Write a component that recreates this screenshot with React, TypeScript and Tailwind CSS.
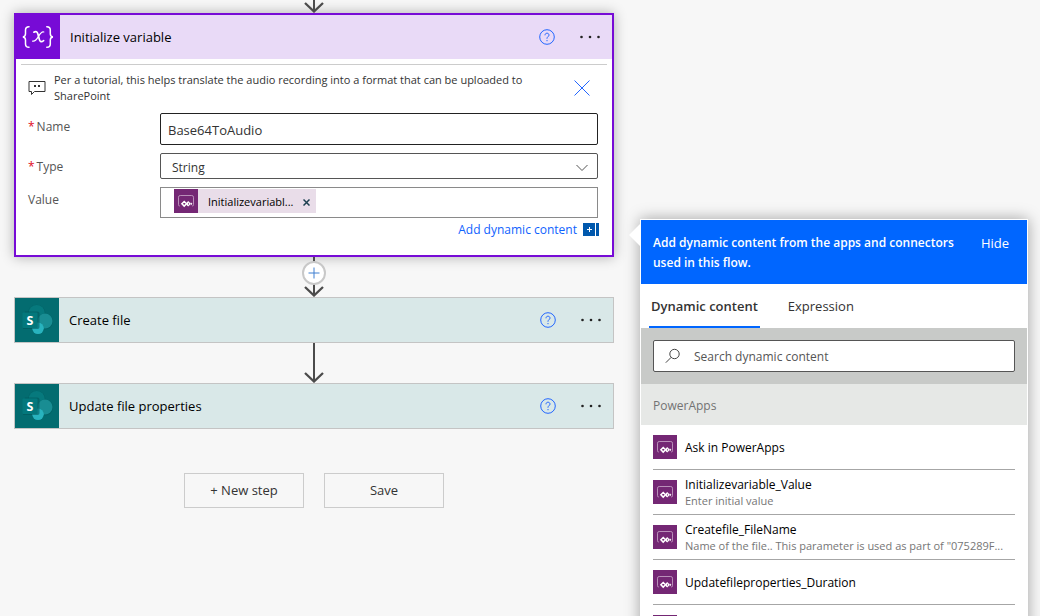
import React from 'react';

function BracesIcon() {
  return (
    <svg viewBox="0 0 44 44" className="h-11 w-11" fill="none" stroke="#fff" strokeLinecap="round" aria-hidden="true">
      <path d="M13 11.700c-2.700 0-3.500 1-3.500 3.300v3.800c0 2-.7 3-2.700 3.100 2 .1 2.700 1.200 2.700 3.200v3.800c0 2.300.8 3.300 3.500 3.300" strokeWidth="1.500" />
      <path d="M30.800 11.700c2.700 0 3.500 1 3.500 3.300v3.800c0 2 .7 3 2.700 3.100-2 .1-2.700 1.200-2.700 3.200v3.800c0 2.300-.8 3.300-3.500 3.300" strokeWidth="1.500" />
      <path d="M17.800 17.200c2.300-1.200 3.400-.3 4.100 1.800l1.500 5.600c.6 2.200 2 2.800 4.200 1" strokeWidth="1.700" />
      <path d="M27.800 17c-2-.8-3.400 1.200-5.200 4.200s-3.200 5.800-6 4.900" strokeWidth="1.200" />
    </svg>
  );
}

function SharePointIcon() {
  return (
    <svg viewBox="0 0 44 44" className="h-11 w-11 shrink-0" aria-hidden="true">
      <rect width="44" height="44" fill="#036c70" />
      <circle cx="21.700" cy="15.500" r="8.700" fill="#045f63" opacity=".7" />
      <circle cx="21.700" cy="15" r="8" fill="#06797d" />
      <circle cx="30" cy="23.500" r="8" fill="#045f63" opacity=".7" />
      <circle cx="30" cy="23" r="7.500" fill="#198d93" />
      <circle cx="23" cy="30.300" r="5.800" fill="#28b3be" />
      <path d="M10 13.500h12.500a2 2 0 0 1 2 2v13.500a2 2 0 0 1-2 2H8z" fill="#025357" opacity=".55" />
      <rect x="7.500" y="14.500" width="15" height="15.500" rx="1" fill="#03787c" />
      <text x="15" y="26.700" textAnchor="middle" fill="#fff" fontSize="12.500" fontWeight="700" fontFamily="Open Sans, sans-serif">S</text>
    </svg>
  );
}

function PowerAppsIcon() {
  return (
    <svg viewBox="0 0 24 24" className="h-6 w-6 shrink-0" fill="none" aria-hidden="true">
      <rect width="24" height="24" fill="#742774" />
      <path d="M5.800 17a1.200 1.200 0 0 1-1.300-1.200V8.200a1.700 1.700 0 0 1 1.700-1.700h11.600a1.700 1.700 0 0 1 1.700 1.700v7.600a1.200 1.200 0 0 1-1.300 1.200" stroke="#b98fb9" />
      <path d="M10.200 12.500l2.300 2.300-2.300 2.300-2.300-2.300z" stroke="#fff" strokeWidth="1.500" />
      <path d="M14.200 12l2.800 2.800-2.800 2.800-1.900-1.900V14z" fill="#fff" />
      <path d="M16.800 13.200l1.600 1.600-1.600 1.600z" fill="#fff" />
      <path d="M14.500 13.900v1.800" stroke="#742774" strokeWidth=".7" />
    </svg>
  );
}

function HelpButton() {
  return (
    <button type="button" aria-label="Help" className="flex h-4 w-4 shrink-0 items-center justify-center">
      <svg viewBox="0 0 16 16" className="h-4 w-4" fill="none" stroke="#2266ff" aria-hidden="true">
        <circle cx="8" cy="8" r="7.300" />
        <path d="M6 6.300c0-1.300.8-2.100 2-2.100s2 .8 2 1.900c0 1.500-2 1.700-2 3.300v.4M8 11v1.200" />
      </svg>
    </button>
  );
}

function MoreButton() {
  return (
    <button type="button" aria-label="More commands" className="flex h-6 w-6 shrink-0 items-center justify-center">
      <svg viewBox="0 0 24 24" className="h-6 w-6" fill="#222" aria-hidden="true">
        <circle cx="3.500" cy="12" r="1.300" />
        <circle cx="12" cy="12" r="1.300" />
        <circle cx="20.500" cy="12" r="1.300" />
      </svg>
    </button>
  );
}

function StepActions() {
  return (
    <div className="flex items-center gap-[23px] pr-[10px]">
      <HelpButton />
      <MoreButton />
    </div>
  );
}

function Arrow({ withAdd = false }: { withAdd?: boolean }) {
  return (
    <div className="relative flex h-10 justify-center">
      <svg viewBox="0 0 24 40" className="h-10 w-6" fill="none" stroke="#4b4b4b" aria-hidden="true">
        <path d="M12 0v38" strokeWidth="2" />
        <path d="M3 30l9 8.500 9-8.500" strokeWidth="2.300" />
      </svg>
      {withAdd && (
        <button
          type="button"
          aria-label="Insert a new step"
          className="absolute top-1 flex h-6 w-6 items-center justify-center rounded-full border-2 border-[#c8c8c8] bg-white"
        >
          <svg viewBox="0 0 12 12" className="h-3 w-3" stroke="#3f7fd0" aria-hidden="true">
            <path d="M6 .5v11M.5 6h11" />
          </svg>
        </button>
      )}
    </div>
  );
}

function FileStep({ title }: { title: string }) {
  return (
    <section className="flex items-center border border-[#c4c4c4] bg-[#d9e8e8]">
      <SharePointIcon />
      <h2 className="flex-1 pt-[2px] pl-[10px] text-[13px] text-black">{title}</h2>
      <StepActions />
    </section>
  );
}

function FieldLabel({ htmlFor, children }: { htmlFor: string; children: string }) {
  return (
    <label htmlFor={htmlFor} className="flex gap-[2px] pt-[5px]">
      <span className="text-[#e00b1c]">*</span>
      {children}
    </label>
  );
}

function VariableStep() {
  return (
    <section className="border-2 border-[#770bd6] bg-white shadow-[0_0_12px_rgba(0,0,0,0.3)]">
      <header className="flex h-11 items-center bg-[#e9daf7]">
        <div className="h-11 w-11 shrink-0 bg-[#770bd6]">
          <BracesIcon />
        </div>
        <h2 className="flex-1 pt-[2px] pl-[10px] text-[13px] text-black">Initialize variable</h2>
        <StepActions />
      </header>
      <div className="mx-[5px] mt-[5px] border-t border-[#cccccc]" />
      <div className="flex items-center pt-[7px] pr-[22px] pl-3">
        <svg viewBox="0 0 18 16" className="h-4 w-[18px] shrink-0" fill="none" stroke="#333" aria-hidden="true">
          <path d="M1 1.500h16v10H6.500L3.500 14.500v-3H1z" />
          <path d="M6 6h2M10 6h2" strokeWidth="2" />
        </svg>
        <p className="flex-1 pr-6 pl-2 text-[11px] leading-4 text-[#333]">
          Per a tutorial, this helps translate the audio recording into a format that can be uploaded to SharePoint
        </p>
        <button type="button" aria-label="Remove comment" className="h-4 w-4 shrink-0">
          <svg viewBox="0 0 16 16" className="h-4 w-4" stroke="#2266ff" aria-hidden="true">
            <path d="M.5.5l15 15M15.500.5l-15 15" />
          </svg>
        </button>
      </div>
      <div className="mt-[9px] grid grid-cols-[132px_1fr] gap-y-2 pr-[14px] pl-3 text-[12px] text-[#555]">
        <FieldLabel htmlFor="name">Name</FieldLabel>
        <input
          id="name"
          defaultValue="Base64ToAudio"
          className="h-8 w-full rounded-[2px] border border-[#222] bg-white px-[7px] pt-[2px] text-[13px] text-[#333]"
        />
        <FieldLabel htmlFor="type">Type</FieldLabel>
        <div className="relative">
          <select
            id="type"
            className="block h-[26px] w-full appearance-none rounded-[2px] border border-[#555] bg-white px-[11px] pt-[3px] text-[12px] text-[#333]"
          >
            <option>String</option>
          </select>
          <svg viewBox="0 0 12 8" className="pointer-events-none absolute top-[11px] right-[10px] h-2 w-3" fill="none" stroke="#555" aria-hidden="true">
            <path d="M.5 1L6 6.500 11.500 1" />
          </svg>
        </div>
        <span className="pt-1">Value</span>
        <div className="flex h-[31px] items-start border border-[#8a8a8a] pt-px pl-[13px]">
          <div className="flex h-6 items-center bg-[#e9dde9] text-[11px] text-black">
            <PowerAppsIcon />
            <span className="pt-[2px] pl-[10px]">Initializevariabl...</span>
            <button type="button" aria-label="Remove token" className="pt-[2px] pr-[6px] pl-[10px]">
              <svg viewBox="0 0 7 7" className="h-[7px] w-[7px]" stroke="#1d4050" strokeWidth="1.500" aria-hidden="true">
                <path d="M.5.5l6 6M6.500.5l-6 6" />
              </svg>
            </button>
          </div>
        </div>
      </div>
      <div className="flex justify-end pt-[3px] pr-[13px] pb-[17px]">
        <button type="button" className="flex items-center gap-[6px] text-[12px] leading-[17px] text-[#0f62fe]">
          Add dynamic content
          <svg viewBox="0 0 16 13" className="h-[13px] w-4" aria-hidden="true">
            <path d="M0 0h12v13H0zM13 0h3v13h-3z" fill="#0058ad" />
            <path d="M6.500 4v5M4 6.500h5" stroke="#fff" />
          </svg>
        </button>
      </div>
    </section>
  );
}

const parameters = [
  { name: 'Ask in PowerApps' },
  { name: 'Initializevariable_Value', note: 'Enter initial value' },
  { name: 'Createfile_FileName', note: 'Name of the file.. This parameter is used as part of "075289F...' },
  { name: 'Updatefileproperties_Duration' },
  { name: '' },
];

function DynamicContentPanel() {
  return (
    <aside className="relative mt-[219px] w-[388px] shrink-0 border border-white bg-white shadow-[0_0_14px_rgba(0,0,0,0.35)]">
      <svg viewBox="0 0 12 24" className="absolute top-[3px] -left-3 h-6 w-3" fill="#fff" aria-hidden="true">
        <path d="M12 0L0 12l12 12z" />
      </svg>
      <header className="flex h-16 items-start justify-between bg-[#0066ff] pt-[13px] pr-[18px] pl-3 text-[13px] leading-5 text-white">
        <p className="w-[312px] text-[12px] leading-5 font-semibold">Add dynamic content from the apps and connectors used in this flow.</p>
        <button type="button">Hide</button>
      </header>
      <div role="tablist" className="flex h-11 gap-[26px] pl-2 text-[13px] text-[#333]">
        <button type="button" role="tab" aria-selected="true" className="border-b-2 border-[#0066ff] px-[2px] pt-[3px] font-semibold">
          Dynamic content
        </button>
        <button type="button" role="tab" aria-selected="false" className="px-[2px] pt-px">
          Expression
        </button>
      </div>
      <div className="bg-[#c8cac8] p-3">
        <label className="flex h-8 items-center rounded-[2px] border border-[#555] bg-white pl-[11px]">
          <svg viewBox="0 0 16 16" className="h-4 w-4 shrink-0" fill="none" stroke="#444" aria-hidden="true">
            <circle cx="9.500" cy="6" r="4.700" />
            <path d="M6.200 9.300L.8 14.700" />
          </svg>
          <input
            type="search"
            aria-label="Search dynamic content"
            placeholder="Search dynamic content"
            className="w-full min-w-0 pt-px pl-[13px] text-[12px] text-[#333] placeholder:text-[#555]"
          />
        </label>
      </div>
      <h3 className="flex h-[41px] items-center bg-[#e6e8e6] pt-[2px] pl-3 text-[12px] text-[#737373]">PowerApps</h3>
      <ul className="px-3">
        {parameters.map((item) => (
          <li key={item.name} className="flex h-[45px] items-center gap-2 border-b border-[#a6a6a6]">
            <PowerAppsIcon />
            <div className="min-w-0 flex-1 pt-[2px] leading-4">
              <p className="text-[12px] font-medium text-black">{item.name}</p>
              {item.note && <p className="truncate text-[11px] text-[#767676]">{item.note}</p>}
            </div>
          </li>
        ))}
      </ul>
    </aside>
  );
}

export default function App() {
  return (
    <div className="flex h-screen items-start gap-[26px] overflow-hidden bg-[#f7f7f7] pr-3 pl-[14px] font-['Open_Sans','Noto_Sans',sans-serif]">
      <main className="min-w-0 flex-1">
        <div className="flex h-[13px] items-end overflow-hidden">
          <div className="flex-1">
            <Arrow />
          </div>
        </div>
        <VariableStep />
        <Arrow withAdd />
        <FileStep title="Create file" />
        <Arrow />
        <FileStep title="Update file properties" />
        <div className="mt-11 flex justify-center gap-5 text-[13px] text-[#333]">
          <button type="button" className="h-[35px] w-[120px] border border-[#cccccc]">
            + New step
          </button>
          <button type="button" className="h-[35px] w-[120px] border border-[#cccccc]">
            Save
          </button>
        </div>
      </main>
      <DynamicContentPanel />
    </div>
  );
}
